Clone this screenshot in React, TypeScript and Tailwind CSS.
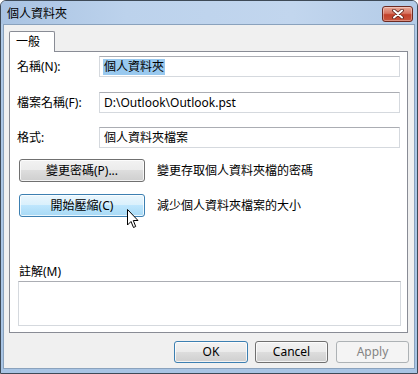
import React from "react";

const font = "font-['Noto_Sans','Noto_Sans_CJK_TC',sans-serif]";

function Field({ label, value, selected }: { label: string; value: string; selected?: boolean }) {
  return (
    <div className="flex items-center h-[21px]">
      <div className="w-[89px] pl-[7px] text-[12px] leading-none">{label}</div>
      <div className="w-[301px] h-[21px] bg-white border border-[#d5d9de] border-t-[#abadb3] flex items-center pl-[3px] text-[12px] leading-none">
        {selected ? <span className="bg-[#99c9ef] px-[1px] py-[2px]">{value}</span> : <span className="px-[1px]">{value}</span>}
      </div>
    </div>
  );
}

function VButton({ children, hover, className = "" }: { children: React.ReactNode; hover?: boolean; className?: string }) {
  const base = hover
    ? "border-[#3c7fb1] bg-[linear-gradient(to_bottom,#eaf6fd_0%,#d9f0fc_50%,#bee6fd_50%,#a7d9f5_100%)]"
    : "border-[#707070] bg-[linear-gradient(to_bottom,#f2f2f2_0%,#ebebeb_50%,#dddddd_50%,#cfcfcf_100%)]";
  return (
    <div
      className={`flex items-center justify-center rounded-[3px] border ${base} shadow-[inset_0_0_0_1px_rgba(255,255,255,0.75)] text-[12px] leading-none ${className}`}
    >
      {children}
    </div>
  );
}

export default function App() {
  return (
    <div className={`relative w-[418px] h-[374px] ${font} text-black`}>
      <div className="w-[418px] h-[374px] flex flex-col bg-[linear-gradient(to_bottom,#b9cfe9,#aec8e6_40px,#a8c4e4)] border border-[#3e4a57] rounded-t-[6px] overflow-hidden">
        {/* Title bar */}
        <div className="h-[23px] flex items-center justify-between pl-[6px] pr-[4px] bg-[linear-gradient(to_right,#a9c3e2,#bcd2ec_30%,#c2d6ee_70%,#b3cbe7)]">
          <div className="text-[12px] leading-none pt-[2px]">個人資料夾</div>
          <div className="w-[31px] h-[16px] mt-[3px] rounded-[3px] border border-[#6d2a22] bg-[linear-gradient(to_bottom,#e8a898_0%,#d7735f_45%,#c2412b_55%,#c9553d_100%)] shadow-[inset_0_0_0_1px_rgba(255,255,255,0.35)] flex items-center justify-center">
            <svg width="12" height="10" viewBox="0 0 12 10">
              <path d="M2 1.5 L10 8.5 M10 1.5 L2 8.5" stroke="#5a2018" strokeWidth="3.6" strokeLinecap="round" />
              <path d="M2 1.5 L10 8.5 M10 1.5 L2 8.5" stroke="#ffffff" strokeWidth="2" strokeLinecap="round" />
            </svg>
          </div>
        </div>
        {/* Body */}
        <div className="flex-1 mx-[2px] mb-[4px] border border-[#8aa2bd] bg-[#f0f0f0] flex flex-col">
          <div className="pl-[5px] pt-[6px] flex">
            <div className="relative z-10 -mb-px w-[46px] h-[21px] bg-white border border-b-0 border-[#898c95] rounded-t-[2px] flex items-center pl-[6px] text-[12px] leading-none">
              一般
            </div>
          </div>
          <div className="ml-[5px] w-[399px] h-[282px] border border-[#898c95] bg-white flex flex-col">
            <div className="mt-[4px]">
              <Field label="名稱(N):" value="個人資料夾" selected />
            </div>
            <div className="mt-[15px]">
              <Field label="檔案名稱(F):" value="D:\Outlook\Outlook.pst" />
            </div>
            <div className="mt-[14px]">
              <Field label="格式:" value="個人資料夾檔案" />
            </div>
            <div className="mt-[11px] flex items-center pl-[9px]">
              <VButton className="w-[126px] h-[23px]">變更密碼(P)...</VButton>
              <div className="ml-[12px] text-[12px] leading-none">變更存取個人資料夾檔的密碼</div>
            </div>
            <div className="mt-[12px] flex items-center pl-[9px]">
              <VButton hover className="w-[126px] h-[23px]">開始壓縮(C)</VButton>
              <div className="ml-[12px] text-[12px] leading-none">減少個人資料夾檔案的大小</div>
            </div>
            <div className="mt-[47px] h-[16px] pl-[9px] flex items-center text-[12px] leading-none">註解(M)</div>
            <div className="mt-[1px] ml-[8px] w-[383px] h-[45px] bg-white border border-[#d5d9de] border-t-[#abadb3]" />
          </div>
          <div className="mt-[8px] flex justify-end pr-[5px] gap-[7px]">
            <VButton className="w-[74px] h-[22px] !border-[#3c7fb1] shadow-[inset_0_0_0_1px_#b6e3fb]">OK</VButton>
            <VButton className="w-[73px] h-[22px]">Cancel</VButton>
            <div className="w-[73px] h-[22px] ml-[1px] rounded-[3px] border border-[#adb2b5] bg-[#f4f4f4] flex items-center justify-center text-[12px] leading-none text-[#838383]">
              Apply
            </div>
          </div>
        </div>
      </div>
      {/* Mouse cursor */}
      <svg className="absolute left-[127px] top-[209px]" width="13" height="20" viewBox="0 0 13 20">
        <path d="M0.5 0.5 L0.5 16 L4 12.5 L6.5 18.5 L8.7 17.5 L6.3 11.5 L11 11.5 Z" fill="#ffffff" stroke="#000000" strokeWidth="1" strokeLinejoin="round" />
      </svg>
    </div>
  );
}
